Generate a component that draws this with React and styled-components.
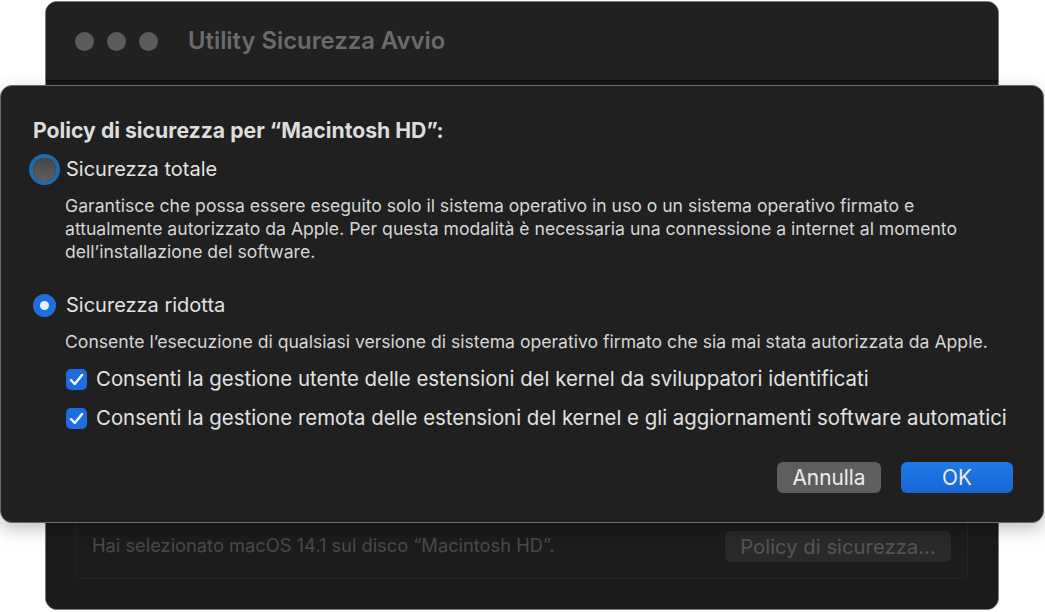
import React from 'react';
import styled, { createGlobalStyle } from 'styled-components';

const GlobalStyle = createGlobalStyle`
  html, body {
    margin: 0;
    padding: 0;
    background: #ffffff;
  }
  body {
    font-family: Inter, "Liberation Sans", sans-serif;
    -webkit-font-smoothing: antialiased;
  }
`;

const Page = styled.div`
  position: relative;
  width: 1045px;
  height: 612px;
  overflow: hidden;
  background: #ffffff;
`;

const BackWindow = styled.div`
  margin: 1px 0 0 45px;
  width: 952px;
  height: 607px;
  display: flex;
  flex-direction: column;
  background: #1e1e1e;
  border: 1px solid #7a7a7a;
  border-radius: 12px;
  overflow: hidden;
`;

const TitleBar = styled.div`
  height: 78px;
  display: flex;
  align-items: center;
  padding-left: 29px;
  background: #212121;
  border-bottom: 2px solid #121212;
`;

const Lights = styled.div`
  display: flex;
  gap: 13px;
  margin-right: 30px;
`;

const Light = styled.span`
  width: 19px;
  height: 19px;
  border-radius: 50%;
  background: #5c5c5c;
`;

const WindowTitle = styled.div`
  font-size: 23.8px;
  font-weight: 600;
  color: #6b6b6b;
  margin-top: -2px;
`;

const WindowBody = styled.div`
  flex: 1;
  display: flex;
  flex-direction: column;
  justify-content: flex-end;
  padding: 0 30px 30px 29px;
  background: #1b1b1b;
`;

const GroupBox = styled.div`
  height: 120px;
  display: flex;
  align-items: flex-end;
  justify-content: space-between;
  padding: 0 16px 16px 16px;
  border: 1px solid #262626;
  border-radius: 6px;
  background: #1c1c1c;
`;

const FadedText = styled.span`
  font-size: 18.3px;
  color: #4a4a4a;
  margin-bottom: 6px;
`;

const FadedButton = styled.div`
  width: 226px;
  height: 31px;
  display: flex;
  align-items: center;
  justify-content: center;
  border-radius: 6px;
  background: #2a2a2a;
  color: #555555;
  font-size: 20.3px;
`;

const Sheet = styled.div`
  position: absolute;
  left: 0;
  top: 85px;
  width: 1042px;
  height: 436px;
  box-sizing: content-box;
  background: #202020;
  border: 1px solid #6a6a6a;
  border-radius: 12px;
  box-shadow: 0 6px 18px rgba(0, 0, 0, 0.25);
`;

const SheetContent = styled.div`
  display: flex;
  flex-direction: column;
  padding: 31px 30px 0 32px;
`;

const Heading = styled.div`
  font-size: 21.2px;
  font-weight: 700;
  color: #dddddd;
  line-height: 26px;
`;

const OptionRow = styled.div`
  display: flex;
  align-items: center;
  gap: 10px;
  height: 26px;
  margin-top: ${p => p.$top}px;
`;

const RadioOuter = styled.span`
  width: 23px;
  height: 23px;
  border-radius: 50%;
  box-sizing: border-box;
  display: flex;
  align-items: center;
  justify-content: center;
  flex-shrink: 0;
  background: ${p => (p.$checked ? '#1f6fdc' : 'linear-gradient(#474747, #5e5e5e)')};
  box-shadow: ${p => (p.$focus ? '0 0 0 4px #1e6cad' : 'none')};
`;

const RadioDot = styled.span`
  width: 9px;
  height: 9px;
  border-radius: 50%;
  background: #e6efff;
`;

const OptionLabel = styled.span`
  font-size: 20px;
  color: #e2e2e2;
  line-height: 26px;
`;

const Description = styled.p`
  margin: ${p => p.$top}px 0 0 32px;
  font-size: 17.6px;
  line-height: 23px;
  color: #d6d6d6;
  white-space: nowrap;
`;

const CheckRow = styled.div`
  display: flex;
  align-items: center;
  gap: 9px;
  height: 24px;
  margin: ${p => p.$top}px 0 0 33px;
`;

const CheckBox = styled.span`
  width: 21px;
  height: 21px;
  border-radius: 5px;
  background: #1c6ee0;
  display: flex;
  align-items: center;
  justify-content: center;
  flex-shrink: 0;
`;

const CheckLabel = styled.span`
  font-size: 20.4px;
  color: #e2e2e2;
  line-height: 24px;
  white-space: nowrap;
`;

const Buttons = styled.div`
  display: flex;
  justify-content: flex-end;
  gap: 20px;
  margin-top: 32px;
`;

const Button = styled.button`
  height: 31px;
  width: ${p => p.$width}px;
  border: none;
  border-radius: 6px;
  font-family: inherit;
  font-size: 20.8px;
  color: #ececec;
  background: ${p => (p.$primary ? 'linear-gradient(#1f7ae6, #1766d4)' : '#5e5e5e')};
  padding: 0;
`;

const Check = () => (
  <svg width="15" height="13" viewBox="0 0 15 13">
    <path d="M2 7.2 L5.8 11 L13 2" fill="none" stroke="#ffffff" strokeWidth="2.4" strokeLinecap="round" strokeLinejoin="round" />
  </svg>
);

export default function App() {
  return (
    <Page>
      <GlobalStyle />
      <BackWindow>
        <TitleBar>
          <Lights>
            <Light />
            <Light />
            <Light />
          </Lights>
          <WindowTitle>Utility Sicurezza Avvio</WindowTitle>
        </TitleBar>
        <WindowBody>
          <GroupBox>
            <FadedText>Hai selezionato macOS 14.1 sul disco “Macintosh HD”.</FadedText>
            <FadedButton>Policy di sicurezza...</FadedButton>
          </GroupBox>
        </WindowBody>
      </BackWindow>

      <Sheet>
        <SheetContent>
          <Heading>Policy di sicurezza per “Macintosh HD”:</Heading>
          <OptionRow $top={13}>
            <RadioOuter $focus />
            <OptionLabel>Sicurezza totale</OptionLabel>
          </OptionRow>
          <Description $top={12}>
            Garantisce che possa essere eseguito solo il sistema operativo in uso o un sistema operativo firmato e
            <br />
            attualmente autorizzato da Apple. Per questa modalità è necessaria una connessione a internet al momento
            <br />
            dell’installazione del software.
          </Description>
          <OptionRow $top={29}>
            <RadioOuter $checked>
              <RadioDot />
            </RadioOuter>
            <OptionLabel>Sicurezza ridotta</OptionLabel>
          </OptionRow>
          <Description $top={12}>
            Consente l’esecuzione di qualsiasi versione di sistema operativo firmato che sia mai stata autorizzata da Apple.
          </Description>
          <CheckRow $top={14}>
            <CheckBox><Check /></CheckBox>
            <CheckLabel>Consenti la gestione utente delle estensioni del kernel da sviluppatori identificati</CheckLabel>
          </CheckRow>
          <CheckRow $top={15}>
            <CheckBox><Check /></CheckBox>
            <CheckLabel>Consenti la gestione remota delle estensioni del kernel e gli aggiornamenti software automatici</CheckLabel>
          </CheckRow>
          <Buttons>
            <Button $width={104}>Annulla</Button>
            <Button $width={112} $primary>OK</Button>
          </Buttons>
        </SheetContent>
      </Sheet>
    </Page>
  );
}
